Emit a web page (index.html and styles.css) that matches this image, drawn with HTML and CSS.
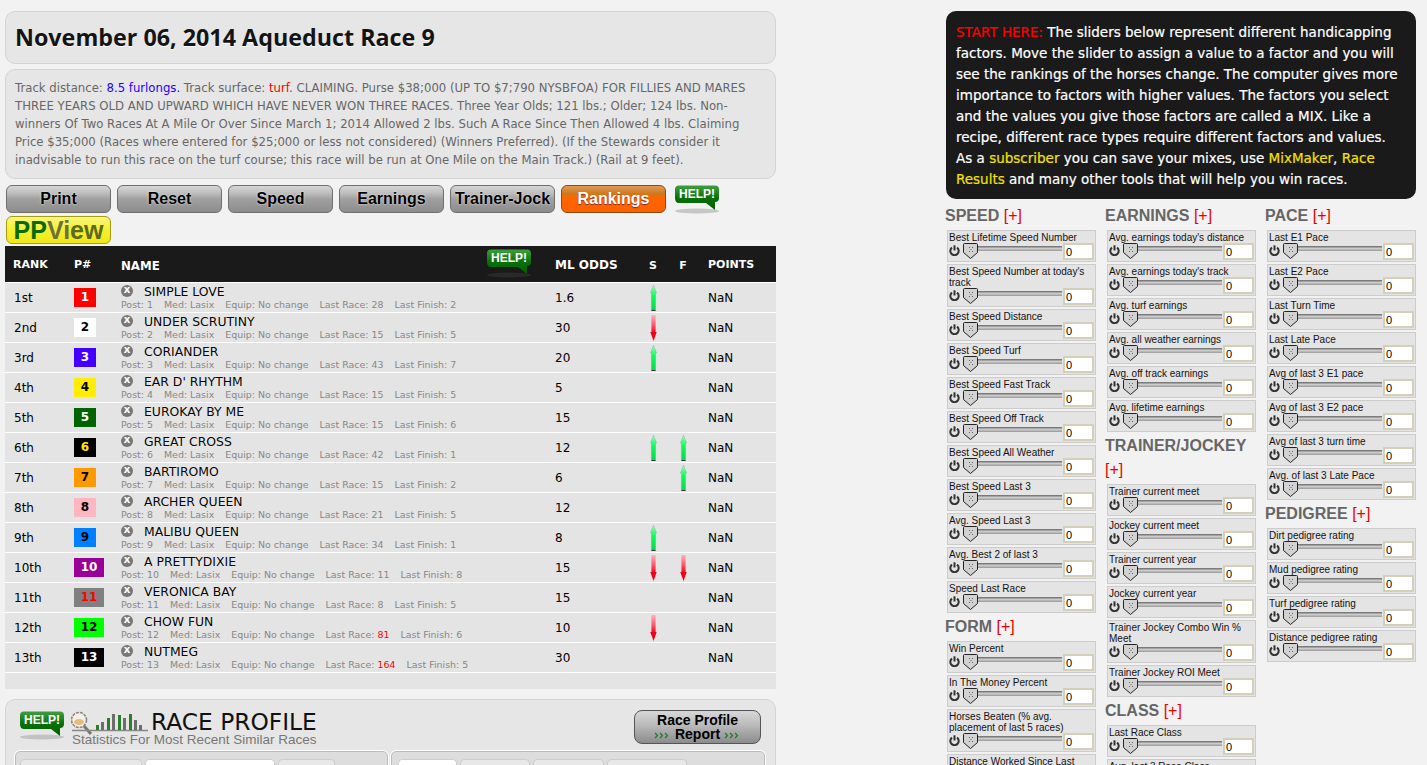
FILE: index.html
```html
<!DOCTYPE html>
<html lang="en">
<head>
<meta charset="utf-8">
<title>November 06, 2014 Aqueduct Race 9</title>
<link rel="stylesheet" href="styles.css">
</head>
<body>
<svg class="defs" aria-hidden="true">
  <defs>
    <linearGradient id="gUp" x1="0" y1="0" x2="0" y2="1"><stop offset="0" stop-color="#9dffc0"/><stop offset=".45" stop-color="#10f85c"/><stop offset="1" stop-color="#08d850"/></linearGradient>
    <linearGradient id="gDown" x1="0" y1="0" x2="0" y2="1"><stop offset="0" stop-color="#ffb0bc"/><stop offset=".6" stop-color="#ff5060"/><stop offset="1" stop-color="#f00018"/></linearGradient>
    <linearGradient id="gHelp" x1="0" y1="0" x2="0" y2="1"><stop offset="0" stop-color="#3f9f3f"/><stop offset=".5" stop-color="#0a700a"/><stop offset="1" stop-color="#006000"/></linearGradient>
    <symbol id="up" viewBox="0 0 7 26"><path d="M3.5 0 L6.6 8 L5.6 8 L5.6 25 L1.4 25 L1.4 8 L.4 8 Z" fill="url(#gUp)" stroke="#7d9a88" stroke-width=".3"/><rect x="1.4" y="25" width="4.2" height="1" fill="#333"/></symbol>
    <symbol id="down" viewBox="0 0 7 26"><rect x="1.4" y="0" width="4.2" height="18" fill="url(#gDown)"/><path d="M.3 17 L6.7 17 L3.5 26 Z" fill="#ee0018"/></symbol>
    <symbol id="help" viewBox="0 0 46 29"><ellipse class="help-shadow" cx="22" cy="26" rx="22" ry="2.5"/><path d="M4 0.5 H40 Q44 .5 44 4.5 V13 Q44 17 40 17 V25 L31 18 H4 Q0 18 0 13 V4.5 Q0 .5 4 .5Z" fill="url(#gHelp)"/><text x="22" y="13" text-anchor="middle" class="help-text">HELP!</text></symbol>
    <symbol id="power" viewBox="0 0 11 11"><path d="M3 2.6 A4.2 4.2 0 1 0 8 2.6" fill="none" stroke="#333" stroke-width="2"/><path d="M5.5 .3 V5.5" stroke="#333" stroke-width="2"/></symbol>
    <symbol id="thumb" viewBox="0 0 15 16"><path d="M1.5 .5 H13.5 Q14.5 .5 14.5 1.5 V9.5 L7.5 15.5 L.5 9.5 V1.5 Q.5 .5 1.5 .5Z" fill="#d2d2d2" stroke="#222"/><path d="M6 4.5h1M9 4.5h1M7.5 6.5h1M6 8.5h1M9 8.5h1" stroke="#666"/></symbol>
    <symbol id="chev" viewBox="0 0 17 7"><path d="M1 1l2.5 2.5L1 6M6 1l2.5 2.5L6 6M11 1l2.5 2.5L11 6" fill="none" stroke="#1c7a2c" stroke-width="1.2"/></symbol>
  </defs>
</svg>

<div class="page">
  <main class="left">
    <header class="panel title-panel"><h1>November 06, 2014 Aqueduct Race 9</h1></header>
    <section class="panel info-panel">
      <p>Track distance: <span class="blue">8.5 furlongs.</span> Track surface: <span class="red">turf</span>. CLAIMING. Purse $38;000 (UP TO $7;790 NYSBFOA) FOR FILLIES AND MARES<br>THREE YEARS OLD AND UPWARD WHICH HAVE NEVER WON THREE RACES. Three Year Olds; 121 lbs.; Older; 124 lbs. Non-<br>winners Of Two Races At A Mile Or Over Since March 1; 2014 Allowed 2 lbs. Such A Race Since Then Allowed 4 lbs. Claiming<br>Price $35;000 (Races where entered for $25;000 or less not considered) (Winners Preferred). (If the Stewards consider it<br>inadvisable to run this race on the turf course; this race will be run at One Mile on the Main Track.) (Rail at 9 feet).</p>
    </section>
    <nav class="buttons">
      <button class="btn">Print</button>
      <button class="btn">Reset</button>
      <button class="btn">Speed</button>
      <button class="btn">Earnings</button>
      <button class="btn">Trainer-Jock</button>
      <button class="btn btn-on">Rankings</button>
      <svg class="help help-top"><use href="#help"/></svg>
      <button class="btn btn-pp"><span class="pp">PP</span><span class="vi">Vi</span><span class="ew">ew</span></button>
    </nav>

    <section class="table">
      <div class="thead">
        <div class="th-rank">RANK</div><div>P#</div>
        <div class="th-name"><span>NAME</span><svg class="help help-head"><use href="#help"/></svg></div>
        <div class="th-odds">ML ODDS</div><div class="c">S</div><div class="c">F</div><div class="pts">POINTS</div>
      </div>
      <div class="row"><div class="rank">1st</div><div><span class="num n1">1</span></div><div class="horse"><div class="hname"><i class="x">x</i>SIMPLE LOVE</div><div class="meta"><span>Post: 1</span><span>Med: Lasix</span><span>Equip: No change</span><span>Last Race: 28</span><span>Last Finish: 2</span></div></div><div class="odds">1.6</div><div class="c"><svg class="arrow"><use href="#up"/></svg></div><div class="c"></div><div class="pts">NaN</div></div>
      <div class="row"><div class="rank">2nd</div><div><span class="num n2">2</span></div><div class="horse"><div class="hname"><i class="x">x</i>UNDER SCRUTINY</div><div class="meta"><span>Post: 2</span><span>Med: Lasix</span><span>Equip: No change</span><span>Last Race: 15</span><span>Last Finish: 5</span></div></div><div class="odds">30</div><div class="c"><svg class="arrow"><use href="#down"/></svg></div><div class="c"></div><div class="pts">NaN</div></div>
      <div class="row"><div class="rank">3rd</div><div><span class="num n3">3</span></div><div class="horse"><div class="hname"><i class="x">x</i>CORIANDER</div><div class="meta"><span>Post: 3</span><span>Med: Lasix</span><span>Equip: No change</span><span>Last Race: 43</span><span>Last Finish: 7</span></div></div><div class="odds">20</div><div class="c"><svg class="arrow"><use href="#up"/></svg></div><div class="c"></div><div class="pts">NaN</div></div>
      <div class="row"><div class="rank">4th</div><div><span class="num n4">4</span></div><div class="horse"><div class="hname"><i class="x">x</i>EAR D' RHYTHM</div><div class="meta"><span>Post: 4</span><span>Med: Lasix</span><span>Equip: No change</span><span>Last Race: 15</span><span>Last Finish: 5</span></div></div><div class="odds">5</div><div class="c"></div><div class="c"></div><div class="pts">NaN</div></div>
      <div class="row"><div class="rank">5th</div><div><span class="num n5">5</span></div><div class="horse"><div class="hname"><i class="x">x</i>EUROKAY BY ME</div><div class="meta"><span>Post: 5</span><span>Med: Lasix</span><span>Equip: No change</span><span>Last Race: 15</span><span>Last Finish: 6</span></div></div><div class="odds">15</div><div class="c"></div><div class="c"></div><div class="pts">NaN</div></div>
      <div class="row"><div class="rank">6th</div><div><span class="num n6">6</span></div><div class="horse"><div class="hname"><i class="x">x</i>GREAT CROSS</div><div class="meta"><span>Post: 6</span><span>Med: Lasix</span><span>Equip: No change</span><span>Last Race: 42</span><span>Last Finish: 1</span></div></div><div class="odds">12</div><div class="c"><svg class="arrow"><use href="#up"/></svg></div><div class="c"><svg class="arrow"><use href="#up"/></svg></div><div class="pts">NaN</div></div>
      <div class="row"><div class="rank">7th</div><div><span class="num n7">7</span></div><div class="horse"><div class="hname"><i class="x">x</i>BARTIROMO</div><div class="meta"><span>Post: 7</span><span>Med: Lasix</span><span>Equip: No change</span><span>Last Race: 15</span><span>Last Finish: 2</span></div></div><div class="odds">6</div><div class="c"></div><div class="c"><svg class="arrow"><use href="#up"/></svg></div><div class="pts">NaN</div></div>
      <div class="row"><div class="rank">8th</div><div><span class="num n8">8</span></div><div class="horse"><div class="hname"><i class="x">x</i>ARCHER QUEEN</div><div class="meta"><span>Post: 8</span><span>Med: Lasix</span><span>Equip: No change</span><span>Last Race: 21</span><span>Last Finish: 5</span></div></div><div class="odds">12</div><div class="c"></div><div class="c"></div><div class="pts">NaN</div></div>
      <div class="row"><div class="rank">9th</div><div><span class="num n9">9</span></div><div class="horse"><div class="hname"><i class="x">x</i>MALIBU QUEEN</div><div class="meta"><span>Post: 9</span><span>Med: Lasix</span><span>Equip: No change</span><span>Last Race: 34</span><span>Last Finish: 1</span></div></div><div class="odds">8</div><div class="c"><svg class="arrow"><use href="#up"/></svg></div><div class="c"></div><div class="pts">NaN</div></div>
      <div class="row"><div class="rank">10th</div><div><span class="num wide n10">10</span></div><div class="horse"><div class="hname"><i class="x">x</i>A PRETTYDIXIE</div><div class="meta"><span>Post: 10</span><span>Med: Lasix</span><span>Equip: No change</span><span>Last Race: 11</span><span>Last Finish: 8</span></div></div><div class="odds">15</div><div class="c"><svg class="arrow"><use href="#down"/></svg></div><div class="c"><svg class="arrow"><use href="#down"/></svg></div><div class="pts">NaN</div></div>
      <div class="row"><div class="rank">11th</div><div><span class="num wide n11">11</span></div><div class="horse"><div class="hname"><i class="x">x</i>VERONICA BAY</div><div class="meta"><span>Post: 11</span><span>Med: Lasix</span><span>Equip: No change</span><span>Last Race: 8</span><span>Last Finish: 5</span></div></div><div class="odds">15</div><div class="c"></div><div class="c"></div><div class="pts">NaN</div></div>
      <div class="row"><div class="rank">12th</div><div><span class="num wide n12">12</span></div><div class="horse"><div class="hname"><i class="x">x</i>CHOW FUN</div><div class="meta"><span>Post: 12</span><span>Med: Lasix</span><span>Equip: No change</span><span>Last Race: <b class="red">81</b></span><span>Last Finish: 6</span></div></div><div class="odds">10</div><div class="c"><svg class="arrow"><use href="#down"/></svg></div><div class="c"></div><div class="pts">NaN</div></div>
      <div class="row"><div class="rank">13th</div><div><span class="num wide n13">13</span></div><div class="horse"><div class="hname"><i class="x">x</i>NUTMEG</div><div class="meta"><span>Post: 13</span><span>Med: Lasix</span><span>Equip: No change</span><span>Last Race: <b class="red">164</b></span><span>Last Finish: 5</span></div></div><div class="odds">30</div><div class="c"></div><div class="c"></div><div class="pts">NaN</div></div>
      <div class="tfoot"></div>
    </section>

    <section class="panel profile">
      <div class="profile-head">
        <svg class="help help-profile"><use href="#help"/></svg>
        <svg class="logo" viewBox="0 0 77 32">
          <circle cx="8" cy="10" r="7.5" fill="#f3efe2" stroke="#888" stroke-width="1.6" stroke-dasharray="3 1"/>
          <ellipse cx="8" cy="12" rx="5" ry="3" fill="#e4bd7c"/>
          <path d="M13 16 L20 24" stroke="#777" stroke-width="3"/>
          <path d="M1 20.5 H77" stroke="#888" stroke-width="1.6"/>
          <path d="M25 15h3v5h-3zM36 8h3v12h-3zM47 5h3v15h-3zM58 4h3v16h-3z" fill="#2a7f2a"/>
          <path d="M30 12h3v8h-3zM41 4h3v16h-3zM52 8h3v12h-3zM63 10h3v10h-3zM68 15h3v5h-3z" fill="#6d6d6d"/>
        </svg>
        <div class="profile-title">
          <h2>RACE PROFILE</h2>
          <p>Statistics For Most Recent Similar Races</p>
        </div>
        <button class="report">Race Profile<br><svg class="chev"><use href="#chev"/></svg> Report <svg class="chev"><use href="#chev"/></svg></button>
      </div>
      <div class="tabsets">
        <div class="tabset"><span class="tab t1"></span><span class="tab t2 on"></span><span class="tab t3"></span></div>
        <div class="tabset"><span class="tab t4 on"></span><span class="tab t5"></span><span class="tab t6"></span><span class="tab t7"></span></div>
      </div>
    </section>
  </main>

  <aside class="right">
    <div class="intro"><span class="red">START HERE:</span> The sliders below represent different handicapping<br>factors. Move the slider to assign a value to a factor and you will<br>see the rankings of the horses change. The computer gives more<br>importance to factors with higher values. The factors you select<br>and the values you give those factors are called a MIX. Like a<br>recipe, different race types require different factors and values.<br>As a <span class="yellow">subscriber</span> you can save your mixes, use <span class="yellow">MixMaker</span>, <span class="yellow">Race<br>Results</span> and many other tools that will help you win races.</div>
    <div class="factors">
      <div class="fcol">
        <h3>SPEED <span>[+]</span></h3>
        <div class="card"><div class="lab">Best Lifetime Speed Number</div><div class="ctl"><svg class="pw"><use href="#power"/></svg><div class="sl"><svg class="th"><use href="#thumb"/></svg></div><input class="val" value="0"></div></div>
        <div class="card"><div class="lab">Best Speed Number at today's track</div><div class="ctl"><svg class="pw"><use href="#power"/></svg><div class="sl"><svg class="th"><use href="#thumb"/></svg></div><input class="val" value="0"></div></div>
        <div class="card"><div class="lab">Best Speed Distance</div><div class="ctl"><svg class="pw"><use href="#power"/></svg><div class="sl"><svg class="th"><use href="#thumb"/></svg></div><input class="val" value="0"></div></div>
        <div class="card"><div class="lab">Best Speed Turf</div><div class="ctl"><svg class="pw"><use href="#power"/></svg><div class="sl"><svg class="th"><use href="#thumb"/></svg></div><input class="val" value="0"></div></div>
        <div class="card"><div class="lab">Best Speed Fast Track</div><div class="ctl"><svg class="pw"><use href="#power"/></svg><div class="sl"><svg class="th"><use href="#thumb"/></svg></div><input class="val" value="0"></div></div>
        <div class="card"><div class="lab">Best Speed Off Track</div><div class="ctl"><svg class="pw"><use href="#power"/></svg><div class="sl"><svg class="th"><use href="#thumb"/></svg></div><input class="val" value="0"></div></div>
        <div class="card"><div class="lab">Best Speed All Weather</div><div class="ctl"><svg class="pw"><use href="#power"/></svg><div class="sl"><svg class="th"><use href="#thumb"/></svg></div><input class="val" value="0"></div></div>
        <div class="card"><div class="lab">Best Speed Last 3</div><div class="ctl"><svg class="pw"><use href="#power"/></svg><div class="sl"><svg class="th"><use href="#thumb"/></svg></div><input class="val" value="0"></div></div>
        <div class="card"><div class="lab">Avg. Speed Last 3</div><div class="ctl"><svg class="pw"><use href="#power"/></svg><div class="sl"><svg class="th"><use href="#thumb"/></svg></div><input class="val" value="0"></div></div>
        <div class="card"><div class="lab">Avg. Best 2 of last 3</div><div class="ctl"><svg class="pw"><use href="#power"/></svg><div class="sl"><svg class="th"><use href="#thumb"/></svg></div><input class="val" value="0"></div></div>
        <div class="card"><div class="lab">Speed Last Race</div><div class="ctl"><svg class="pw"><use href="#power"/></svg><div class="sl"><svg class="th"><use href="#thumb"/></svg></div><input class="val" value="0"></div></div>
        <h3>FORM <span>[+]</span></h3>
        <div class="card"><div class="lab">Win Percent</div><div class="ctl"><svg class="pw"><use href="#power"/></svg><div class="sl"><svg class="th"><use href="#thumb"/></svg></div><input class="val" value="0"></div></div>
        <div class="card"><div class="lab">In The Money Percent</div><div class="ctl"><svg class="pw"><use href="#power"/></svg><div class="sl"><svg class="th"><use href="#thumb"/></svg></div><input class="val" value="0"></div></div>
        <div class="card"><div class="lab">Horses Beaten (% avg. placement of last 5 races)</div><div class="ctl"><svg class="pw"><use href="#power"/></svg><div class="sl"><svg class="th"><use href="#thumb"/></svg></div><input class="val" value="0"></div></div>
        <div class="card"><div class="lab">Distance Worked Since Last Race</div><div class="ctl"><svg class="pw"><use href="#power"/></svg><div class="sl"><svg class="th"><use href="#thumb"/></svg></div><input class="val" value="0"></div></div>
      </div>
      <div class="fcol">
        <h3>EARNINGS <span>[+]</span></h3>
        <div class="card"><div class="lab">Avg. earnings today's distance</div><div class="ctl"><svg class="pw"><use href="#power"/></svg><div class="sl"><svg class="th"><use href="#thumb"/></svg></div><input class="val" value="0"></div></div>
        <div class="card"><div class="lab">Avg. earnings today's track</div><div class="ctl"><svg class="pw"><use href="#power"/></svg><div class="sl"><svg class="th"><use href="#thumb"/></svg></div><input class="val" value="0"></div></div>
        <div class="card"><div class="lab">Avg. turf earnings</div><div class="ctl"><svg class="pw"><use href="#power"/></svg><div class="sl"><svg class="th"><use href="#thumb"/></svg></div><input class="val" value="0"></div></div>
        <div class="card"><div class="lab">Avg. all weather earnings</div><div class="ctl"><svg class="pw"><use href="#power"/></svg><div class="sl"><svg class="th"><use href="#thumb"/></svg></div><input class="val" value="0"></div></div>
        <div class="card"><div class="lab">Avg. off track earnings</div><div class="ctl"><svg class="pw"><use href="#power"/></svg><div class="sl"><svg class="th"><use href="#thumb"/></svg></div><input class="val" value="0"></div></div>
        <div class="card"><div class="lab">Avg. lifetime earnings</div><div class="ctl"><svg class="pw"><use href="#power"/></svg><div class="sl"><svg class="th"><use href="#thumb"/></svg></div><input class="val" value="0"></div></div>
        <h3>TRAINER/JOCKEY <span>[+]</span></h3>
        <div class="card"><div class="lab">Trainer current meet</div><div class="ctl"><svg class="pw"><use href="#power"/></svg><div class="sl"><svg class="th"><use href="#thumb"/></svg></div><input class="val" value="0"></div></div>
        <div class="card"><div class="lab">Jockey current meet</div><div class="ctl"><svg class="pw"><use href="#power"/></svg><div class="sl"><svg class="th"><use href="#thumb"/></svg></div><input class="val" value="0"></div></div>
        <div class="card"><div class="lab">Trainer current year</div><div class="ctl"><svg class="pw"><use href="#power"/></svg><div class="sl"><svg class="th"><use href="#thumb"/></svg></div><input class="val" value="0"></div></div>
        <div class="card"><div class="lab">Jockey current year</div><div class="ctl"><svg class="pw"><use href="#power"/></svg><div class="sl"><svg class="th"><use href="#thumb"/></svg></div><input class="val" value="0"></div></div>
        <div class="card"><div class="lab">Trainer Jockey Combo Win % Meet</div><div class="ctl"><svg class="pw"><use href="#power"/></svg><div class="sl"><svg class="th"><use href="#thumb"/></svg></div><input class="val" value="0"></div></div>
        <div class="card"><div class="lab">Trainer Jockey ROI Meet</div><div class="ctl"><svg class="pw"><use href="#power"/></svg><div class="sl"><svg class="th"><use href="#thumb"/></svg></div><input class="val" value="0"></div></div>
        <h3>CLASS <span>[+]</span></h3>
        <div class="card"><div class="lab">Last Race Class</div><div class="ctl"><svg class="pw"><use href="#power"/></svg><div class="sl"><svg class="th"><use href="#thumb"/></svg></div><input class="val" value="0"></div></div>
        <div class="card"><div class="lab">Avg. last 3 Race Class</div><div class="ctl"><svg class="pw"><use href="#power"/></svg><div class="sl"><svg class="th"><use href="#thumb"/></svg></div><input class="val" value="0"></div></div>
      </div>
      <div class="fcol">
        <h3>PACE <span>[+]</span></h3>
        <div class="card"><div class="lab">Last E1 Pace</div><div class="ctl"><svg class="pw"><use href="#power"/></svg><div class="sl"><svg class="th"><use href="#thumb"/></svg></div><input class="val" value="0"></div></div>
        <div class="card"><div class="lab">Last E2 Pace</div><div class="ctl"><svg class="pw"><use href="#power"/></svg><div class="sl"><svg class="th"><use href="#thumb"/></svg></div><input class="val" value="0"></div></div>
        <div class="card"><div class="lab">Last Turn Time</div><div class="ctl"><svg class="pw"><use href="#power"/></svg><div class="sl"><svg class="th"><use href="#thumb"/></svg></div><input class="val" value="0"></div></div>
        <div class="card"><div class="lab">Last Late Pace</div><div class="ctl"><svg class="pw"><use href="#power"/></svg><div class="sl"><svg class="th"><use href="#thumb"/></svg></div><input class="val" value="0"></div></div>
        <div class="card"><div class="lab">Avg of last 3 E1 pace</div><div class="ctl"><svg class="pw"><use href="#power"/></svg><div class="sl"><svg class="th"><use href="#thumb"/></svg></div><input class="val" value="0"></div></div>
        <div class="card"><div class="lab">Avg of last 3 E2 pace</div><div class="ctl"><svg class="pw"><use href="#power"/></svg><div class="sl"><svg class="th"><use href="#thumb"/></svg></div><input class="val" value="0"></div></div>
        <div class="card"><div class="lab">Avg of last 3 turn time</div><div class="ctl"><svg class="pw"><use href="#power"/></svg><div class="sl"><svg class="th"><use href="#thumb"/></svg></div><input class="val" value="0"></div></div>
        <div class="card"><div class="lab">Avg. of last 3 Late Pace</div><div class="ctl"><svg class="pw"><use href="#power"/></svg><div class="sl"><svg class="th"><use href="#thumb"/></svg></div><input class="val" value="0"></div></div>
        <h3>PEDIGREE <span>[+]</span></h3>
        <div class="card"><div class="lab">Dirt pedigree rating</div><div class="ctl"><svg class="pw"><use href="#power"/></svg><div class="sl"><svg class="th"><use href="#thumb"/></svg></div><input class="val" value="0"></div></div>
        <div class="card"><div class="lab">Mud pedigree rating</div><div class="ctl"><svg class="pw"><use href="#power"/></svg><div class="sl"><svg class="th"><use href="#thumb"/></svg></div><input class="val" value="0"></div></div>
        <div class="card"><div class="lab">Turf pedigree rating</div><div class="ctl"><svg class="pw"><use href="#power"/></svg><div class="sl"><svg class="th"><use href="#thumb"/></svg></div><input class="val" value="0"></div></div>
        <div class="card"><div class="lab">Distance pedigree rating</div><div class="ctl"><svg class="pw"><use href="#power"/></svg><div class="sl"><svg class="th"><use href="#thumb"/></svg></div><input class="val" value="0"></div></div>
      </div>
    </div>
  </aside>
</div>
</body>
</html>
```
FILE: styles.css
```css
* { box-sizing: border-box; }
html, body { margin: 0; height: 765px; overflow: hidden; }
body { background: #f2f2f2; font-family: "DejaVu Sans", sans-serif; color: #000; }
.defs { position: absolute; width: 0; height: 0; }
.help-text { font: bold 12px "Liberation Sans", sans-serif; fill: #fff; }
.help-shadow { fill: var(--sh, #aaa); opacity: .6; }
.page { display: flex; height: 765px; overflow: hidden; padding: 11px 0 0 5px; }
.left { width: 771px; flex: none; }
.right { width: 470px; flex: none; margin-left: 170px; }

.panel { background: #e6e6e6; border: 1px solid #d4d4d4; border-radius: 10px; }
.title-panel { height: 53px; display: flex; align-items: center; padding: 0 0 2px 9px; }
h1 { margin: 0; font: bold 23.3px "Open Sans", sans-serif; color: #141414; text-shadow: 0 1px 0 #fff; white-space: nowrap; }
.info-panel { height: 110px; margin-top: 5px; padding: 9px; }
.info-panel p { margin: 0; font-size: 11.7px; line-height: 18px; color: #666; white-space: nowrap; }
.blue { color: #2200ff; }
.red { color: #f00; }
.yellow { color: #f5e000; }

.buttons { display: flex; flex-wrap: wrap; gap: 3px 6px; margin: 6px 0 2px 1px; }
.btn { width: 105px; height: 28px; padding: 0; border: 1px solid #6f6f6f; border-radius: 6px; background: linear-gradient(#d6d6d6 0, #bdbdbd 28%, #a0a0a0 50%, #8c8c8c 100%); font: bold 16px "Liberation Sans", sans-serif; color: #000; text-shadow: 0 0 2px #fff; }
.btn-on { background: linear-gradient(#e59a55 0, #c87a20 30%, #ff6600 42%, #ff6000 100%); border-color: #8a4a10; color: #fff; text-shadow: 0 1px 1px #7a2a2a; }
.btn-pp { background: linear-gradient(#f8f680 0, #f4f030 50%, #f0e818 100%); border-color: #a89c10; font-size: 25px; text-shadow: none; line-height: 24px; }
.pp { color: #086a08; }
.vi { color: #6c7040; }
.ew { color: #5c6a20; }
.help { display: block; width: 46px; height: 29px; }
.help-top { margin: 0 0 -1px 3px; }
.help-head { margin-top: -2px; --sh: #333; }

.table { width: 771px; }
.thead, .row { display: grid; grid-template-columns: 69px 47px 434px 83px 30px 30px 78px; }
.thead { height: 37px; background: #1a1a1a; border-bottom: 1px solid #fff; align-items: center; color: #fff; font-size: 11px; font-weight: bold; }
.thead .c { padding-top: 2px; }
.th-rank { padding-left: 8px; }
.th-name { display: flex; justify-content: space-between; align-items: center; padding-right: 22px; font-size: 11.8px; }
.th-name span { padding-top: 3px; }
.th-odds { padding-top: 2px; font-size: 12px; }
.row { height: 30px; background: #e4e4e4; border-bottom: 1px solid #fff; align-items: center; font-size: 12px; }
.rank { padding-left: 9px; }
.c { text-align: center; }
.pts { padding-left: 10px; }
.num { display: block; width: 22px; height: 19px; font-size: 12px; font-weight: bold; line-height: 19px; text-align: center; }
.num.wide { width: 30px; }
.n1 { background: #f00; color: #fff; } .n2 { background: #fff; } .n3 { background: #4400ff; color: #fff; }
.n4 { background: #ffee00; } .n5 { background: #006400; color: #fff; } .n6 { background: #000; color: #ffe600; }
.n7 { background: #ff9900; } .n8 { background: #ffb6c1; } .n9 { background: #0080ff; }
.n10 { background: #990099; color: #fff; } .n11 { background: #808080; color: #f00; } .n12 { background: #00ff00; } .n13 { background: #000; color: #fff; }
.horse { height: 29px; padding-top: 1px; }
.hname { display: flex; align-items: center; height: 14px; font-size: 12.4px; text-shadow: 0 0 1px #fff; white-space: nowrap; }
.x { display: block; width: 12px; height: 12px; margin-right: 11px; border-radius: 50%; background: #777; color: #fff; font: bold 9px/11px "Liberation Sans", sans-serif; text-align: center; text-transform: uppercase; }
.meta { display: flex; gap: 11px; font-size: 9.45px; line-height: 13px; color: #888; white-space: nowrap; }
.meta b { font-weight: normal; }
.arrow { display: block; width: 7px; height: 26px; margin: 0 auto; }
.tfoot { height: 16px; background: #e4e4e4; }

.profile { height: 80px; margin-top: 10px; padding: 10px 14px 0 10px; }
.profile-head { display: flex; align-items: flex-start; height: 41px; }
.help-profile { margin: 1px 5px 0 4px; }
.logo { width: 77px; height: 32px; flex: none; margin-right: 3px; }
.profile-title { width: 165px; margin-left: -80px; flex: none; }
.profile-title h2 { margin: 0 0 0 80px; font-size: 23.3px; font-weight: normal; line-height: 23px; white-space: nowrap; color: #111; }
.profile-title p { margin: 0 0 0 1px; font: 13.5px/14px "Liberation Sans", sans-serif; color: #777; white-space: nowrap; }
.report { margin-left: auto; width: 127px; height: 34px; padding: 0; border: 1px solid #555; border-radius: 8px; background: linear-gradient(#d8d8d8 0, #bdbdbd 40%, #8c8c8c 100%); font: bold 14px/14px "Liberation Sans", sans-serif; color: #000; }
.chev { width: 17px; height: 7px; vertical-align: middle; }
.tabsets { display: flex; gap: 3px; margin: 0 -3px 0 0; }
.tabset { display: flex; height: 30px; padding: 7px 0 0 4px; border: 1px solid #bbb; outline: 1px solid #fff; border-radius: 5px; background: #ddd; flex: none; gap: 3px; }
.tabset:first-child { width: 373px; margin-left: -1px; }
.tabset:last-child { width: 374px; padding-left: 6px; }
.tab { display: block; height: 20px; background: #e8e8e8; border: 1px solid #ccc; border-radius: 4px 4px 0 0; }
.tab.on { background: #fff; }
.t1 { width: 122px; } .t2 { width: 130px; } .t3 { width: 57px; }
.t4 { width: 59px; } .t5 { width: 70px; } .t6 { width: 71px; } .t7 { width: 80px; }

.intro { height: 188px; padding: 11px 10px 0; background: #1a1a1a; border-radius: 10px; font-size: 13.5px; line-height: 21px; color: #fff; white-space: nowrap; -webkit-text-stroke: .2px; }
.factors { display: grid; grid-template-columns: 160px 160px 160px; margin-top: 5px; margin-left: -1px; }
h3 { margin: 0 0 2px; font: bold 16px/24px "Liberation Sans", sans-serif; color: #666; }
h3 span { font-weight: normal; color: #e00; }
.fcol { width: 152px; }
.card { width: 149px; margin: 0 0 2px 2px; padding: 1px 0 1px 1px; border: 1px solid #ccc; background: #e4e4e4; }
.lab { font: 10px/11px "Liberation Sans", sans-serif; color: #111; }
.ctl { display: flex; align-items: center; height: 17px; }
.pw { width: 11px; height: 11px; flex: none; margin-right: 3px; margin-top: -2px; }
.sl { position: relative; width: 99px; height: 5px; margin-top: -7px; flex: none; background: linear-gradient(#666, #ccc 50%, #999); }
.th { position: absolute; left: 0; top: -3px; width: 15px; height: 16px; }
.val { width: 31px; height: 17px; margin-left: 1px; padding: 1px; border: 2px solid #d4cfb8; background: #fff; font: 11px "Liberation Sans", sans-serif; color: #000; border-radius: 0; outline: none; }
```
